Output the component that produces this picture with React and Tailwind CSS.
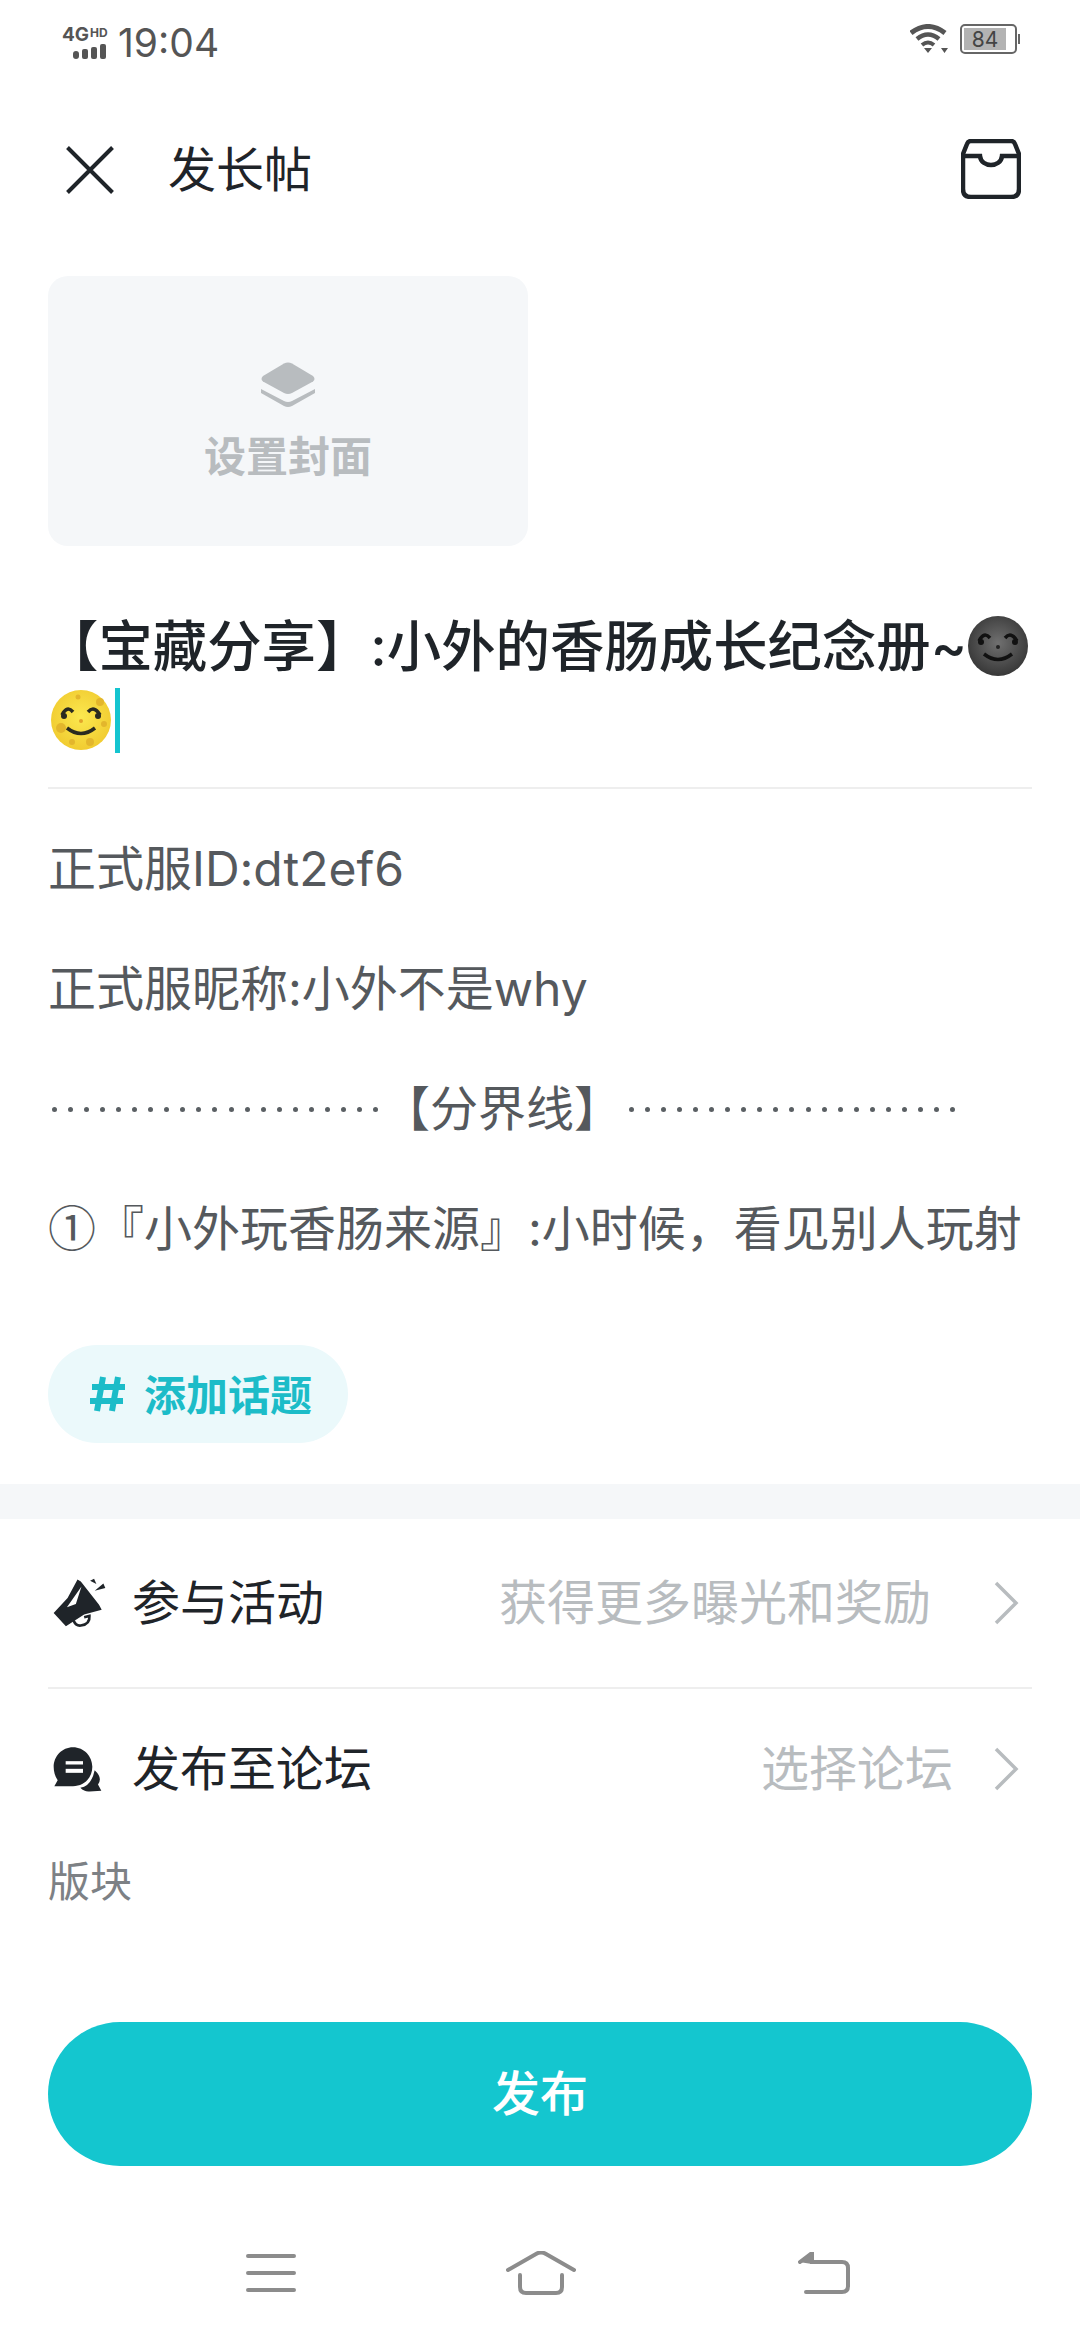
import React from "react";

const cjk = { fontFamily: '"Inter", "Noto Sans CJK SC", sans-serif' };

function Chevron() {
  return (
    <svg width="26" height="44" viewBox="0 0 26 44" fill="none" className="shrink-0">
      <path d="M3 2 L23 22 L3 42" stroke="#b8bcbf" strokeWidth="3.5" />
    </svg>
  );
}

function Moon({ dark }) {
  const id = dark ? "moonDark" : "moonLight";
  const eye = dark ? "#111" : "#2a2a20";
  return (
    <svg width="62" height="60" viewBox="0 0 62 60" className="shrink-0">
      <defs>
        <radialGradient id={id} cx="50%" cy="45%" r="60%">
          <stop offset="0%" stopColor={dark ? "#707070" : "#fbe84f"} />
          <stop offset="100%" stopColor={dark ? "#333333" : "#f0c92e"} />
        </radialGradient>
      </defs>
      <circle cx="31" cy="30" r="30" fill={`url(#${id})`} />
      {!dark && (
        <g fill="#e3b62c">
          <circle cx="11" cy="38" r="5" />
          <circle cx="50" cy="12" r="4" />
          <circle cx="54" cy="34" r="3" />
          <circle cx="40" cy="52" r="4" />
          <circle cx="22" cy="52" r="3" />
          <circle cx="28" cy="7" r="2.5" />
        </g>
      )}
      <path d="M12 25 Q17 15 23 22" stroke={eye} strokeWidth="3.5" fill="none" />
      <circle cx="14" cy="26" r="3" fill={eye} />
      <path d="M38 22 Q44 15 50 25" stroke={eye} strokeWidth="3.5" fill="none" />
      <circle cx="48" cy="26" r="3" fill={eye} />
      <path d="M17 38 Q31 49 45 38" stroke={eye} strokeWidth="3.5" fill="none" />
      <circle cx="31" cy="31" r="2" fill={dark ? "#222" : "#e2a32a"} />
    </svg>
  );
}

function Dots({ className }) {
  return (
    <div className={`flex w-[326px] justify-between shrink-0 ${className}`}>
      {Array.from({ length: 21 }).map((_, i) => (
        <span key={i} className="w-[5px] h-[5px] rounded-full bg-[#5a5f63]" />
      ))}
    </div>
  );
}

function Row({ icon, label, hint, gap, className }) {
  return (
    <div className={`flex items-center mx-12 ${className}`}>
      <div className="w-[84px] shrink-0 flex items-center pl-[5px]">{icon}</div>
      <span className="text-[48px] leading-none text-[#1f2429]">{label}</span>
      <span className="ml-auto text-[48px] leading-none text-[#b8bcbf]">{hint}</span>
      <div className={`${gap} mr-[13px]`}>
        <Chevron />
      </div>
    </div>
  );
}

export default function App() {
  return (
    <div className="w-[1080px] h-[2340px] bg-white flex flex-col overflow-hidden" style={cjk}>
      {/* status bar */}
      <div className="h-[84px] flex items-start justify-between pl-[62px] pr-[60px] pt-[24px] shrink-0">
        <div className="flex items-center gap-[10px]">
          <div className="w-[46px] h-[32px] flex flex-col justify-between">
            <div className="flex items-start gap-[1px] h-[16px] text-[#555] font-bold">
              <span className="text-[19px] leading-[16px]">4G</span>
              <span className="text-[12px] leading-[12px]">HD</span>
            </div>
            <div className="flex items-end gap-[3px] pl-[11px]">
              <span className="w-[6px] h-[8px] rounded-full bg-[#555]" />
              <span className="w-[6px] h-[10px] rounded-[2px] bg-[#555]" />
              <span className="w-[6px] h-[12px] rounded-[2px] bg-[#555]" />
              <span className="w-[6px] h-[15px] rounded-[2px] bg-[#555]" />
            </div>
          </div>
          <span className="text-[39px] leading-[38px] text-[#555]">19:04</span>
        </div>
        <div className="flex items-center gap-[12px]">
          <svg width="38" height="30" viewBox="0 0 38 30" fill="none">
            <path d="M1 9 Q18 -4 35 9" stroke="#555" strokeWidth="5" />
            <path d="M7 15 Q18 6 29 15" stroke="#555" strokeWidth="4.5" />
            <path d="M12 21 Q18 16 24 21" stroke="#555" strokeWidth="4" />
            <path d="M14 24 H22 L18 29 Z M31 24 H38 L34.5 29 Z" fill="#555" />
          </svg>
          <div className="flex items-center">
            <div className="w-[57px] h-[30px] rounded-[5px] border-[2px] border-[#666] p-[2px] flex">
              <div className="w-[42px] bg-[#b3b3b3] flex items-center justify-center text-[21px] leading-none text-[#444]">84</div>
            </div>
            <div className="w-[2px] h-[10px] bg-[#666] ml-[1px]" />
          </div>
        </div>
      </div>

      {/* header */}
      <div className="h-[172px] flex items-center pl-[66px] pr-[59px] shrink-0">
        <svg width="48" height="48" viewBox="0 0 48 48" fill="none" className="shrink-0">
          <path d="M1.5 1.5 L46.5 46.5 M46.5 1.5 L1.5 46.5" stroke="#1f2429" strokeWidth="4" />
        </svg>
        <span className="ml-[54px] text-[48px] leading-none text-[#1f2429]">发长帖</span>
        <svg width="60" height="60" viewBox="0 0 60 60" fill="none" className="ml-auto -mt-[3px]">
          <path d="M10 2 H50 Q53 2 54 5 L58 15 V50 Q58 58 50 58 H10 Q2 58 2 50 V15 L6 5 Q7 2 10 2 Z" stroke="#1f2429" strokeWidth="4.5" strokeLinejoin="round" />
          <path d="M2 17 H19 C20 29 40 29 41 17 H58" stroke="#1f2429" strokeWidth="4.5" />
        </svg>
      </div>

      {/* cover */}
      <div className="ml-12 mt-[20px] w-[480px] h-[270px] rounded-[20px] bg-[#f5f7f9] flex flex-col items-center shrink-0 pt-[86px]">
        <svg width="56" height="46" viewBox="0 0 56 46">
          <path d="M24 1.5 Q28 -0.5 32 1.5 L53 14 Q56 17 53 19.5 L32 31 Q28 33 24 31 L3 19.5 Q0 17 3 14 Z" fill="#b8bcbf" />
          <path d="M1 27 L24 39 Q28 41 32 39 L55 27 V31 L32 44 Q28 46 24 44 L1 31 Z" fill="#b8bcbf" />
        </svg>
        <span className="mt-[28px] text-[42px] leading-none font-semibold text-[#b8bcbf]">设置封面</span>
      </div>

      {/* title */}
      <div className="mx-12 mt-[68px] border-b-2 border-[#eeeeee] h-[175px] shrink-0">
        <div className="flex items-center h-[64px] -ml-[4px] whitespace-nowrap">
          <span className="text-[54.4px] leading-none font-medium text-[#1f2429]">【宝藏分享】:小外的香肠成长纪念册~</span>
          <Moon dark />
        </div>
        <div className="flex items-center h-[66px] mt-[9px] ml-[2px]">
          <Moon />
          <span className="w-[5px] h-[65px] ml-[3px] bg-[#14c4cf]" />
        </div>
      </div>

      {/* body */}
      <div className="mx-12 pt-[20px] text-[48px] leading-[120px] text-[#55595d] shrink-0">
        <p>正式服ID:dt2ef6</p>
        <p>正式服昵称:小外不是why</p>
        <div className="flex items-center h-[120px]">
          <Dots className="ml-[4px]" />
          <span className="ml-[4px]">【分界线】</span>
          <Dots className="ml-[7px]" />
        </div>
        <p className="whitespace-nowrap h-[120px]">
          <span className="font-['Noto_Sans_CJK_SC'] leading-none">①</span>『小外玩香肠来源』:小时候，看见别人玩射
        </p>
      </div>

      {/* topic pill */}
      <div className="ml-12 mt-[56px] w-[300px] h-[98px] rounded-full bg-[#ebf9fb] flex items-center pl-[42px] shrink-0">
        <svg width="36" height="38" viewBox="0 0 36 38" fill="none" className="shrink-0">
          <path d="M13 2 L7 36 M28 2 L22 36 M2 12 H35 M0 26 H33" stroke="#1cbcc8" strokeWidth="6" />
        </svg>
        <span className="ml-[18px] mt-[3px] text-[42px] leading-none font-semibold text-[#1cbcc8]">添加话题</span>
      </div>

      {/* band */}
      <div className="h-[35px] mt-[41px] bg-[#f5f7f9] shrink-0" />

      <Row
        className="h-[170px] border-b-2 border-[#eeeeee]"
        gap="ml-[62px]"
        label="参与活动"
        hint="获得更多曝光和奖励"
        icon={
          <svg width="53" height="50" viewBox="66 110 160 150" fill="#1f2429">
            <path fillRule="evenodd" d="M140 114 L150 120 L205 190 L213 205 L160 220 L105 255 L68 215 L110 170 Z M152 135 L108 198 L135 188 Z" />
            <path d="M178 118 L190 112 L197 128 Z M192 148 L218 126 L224 140 Z" />
            <path d="M128 238 Q135 255 150 253 Q178 250 176 224 L160 228" fill="none" stroke="#1f2429" strokeWidth="8" />
          </svg>
        }
      />
      <Row
        className="h-[160px]"
        gap="ml-[40px]"
        label="发布至论坛"
        hint="选择论坛"
        icon={
          <svg width="50" height="47" viewBox="70 610 150 140" fill="#1f2429">
            <path d="M130 613 C163 613 188 640 188 672 C188 705 163 730 130 730 H74 L84 712 C76 700 72 687 72 672 C72 640 97 613 130 613 Z" />
            <rect x="108" y="655" width="52" height="10" fill="#fff" />
            <rect x="108" y="678" width="52" height="12" fill="#fff" />
            <path d="M195 682 Q220 705 205 725 L215 744 L180 746 Q165 748 152 735 Q185 730 195 682 Z" />
          </svg>
        }
      />

      {/* section label */}
      <div className="mx-12 mt-[12px] text-[42px] leading-none text-[#7d8185] shrink-0">版块</div>

      {/* publish */}
      <div className="mx-12 mt-[119px] h-[144px] rounded-full bg-[#14c6cf] flex items-center justify-center shrink-0">
        <span className="text-[48px] leading-none font-medium text-white">发布</span>
      </div>

      {/* nav bar */}
      <div className="mt-[82px] h-[50px] flex items-center pl-[246px] shrink-0">
        <svg width="50" height="40" viewBox="0 0 50 40" fill="none">
          <path d="M2 3 H48 M2 20 H48 M2 37 H48" stroke="#8c8c8c" strokeWidth="4" strokeLinecap="round" />
        </svg>
        <svg width="70" height="44" viewBox="0 0 70 44" fill="none" className="ml-[210px]">
          <path d="M2 19 L30 3 Q35 0 40 3 L68 19" stroke="#8c8c8c" strokeWidth="4" strokeLinecap="round" />
          <path d="M14 24 V36 Q14 42 20 42 H50 Q56 42 56 36 V24" stroke="#8c8c8c" strokeWidth="4" strokeLinecap="round" />
        </svg>
        <svg width="52" height="42" viewBox="0 0 52 42" fill="none" className="ml-[222px]">
          <path d="M2 10 L14 1 V10 H44 Q50 10 50 16 V34 Q50 40 44 40 H8" stroke="#8c8c8c" strokeWidth="4" strokeLinecap="round" />
          <path d="M1 10 L14 1 V12 Z" fill="#8c8c8c" />
        </svg>
      </div>
    </div>
  );
}
